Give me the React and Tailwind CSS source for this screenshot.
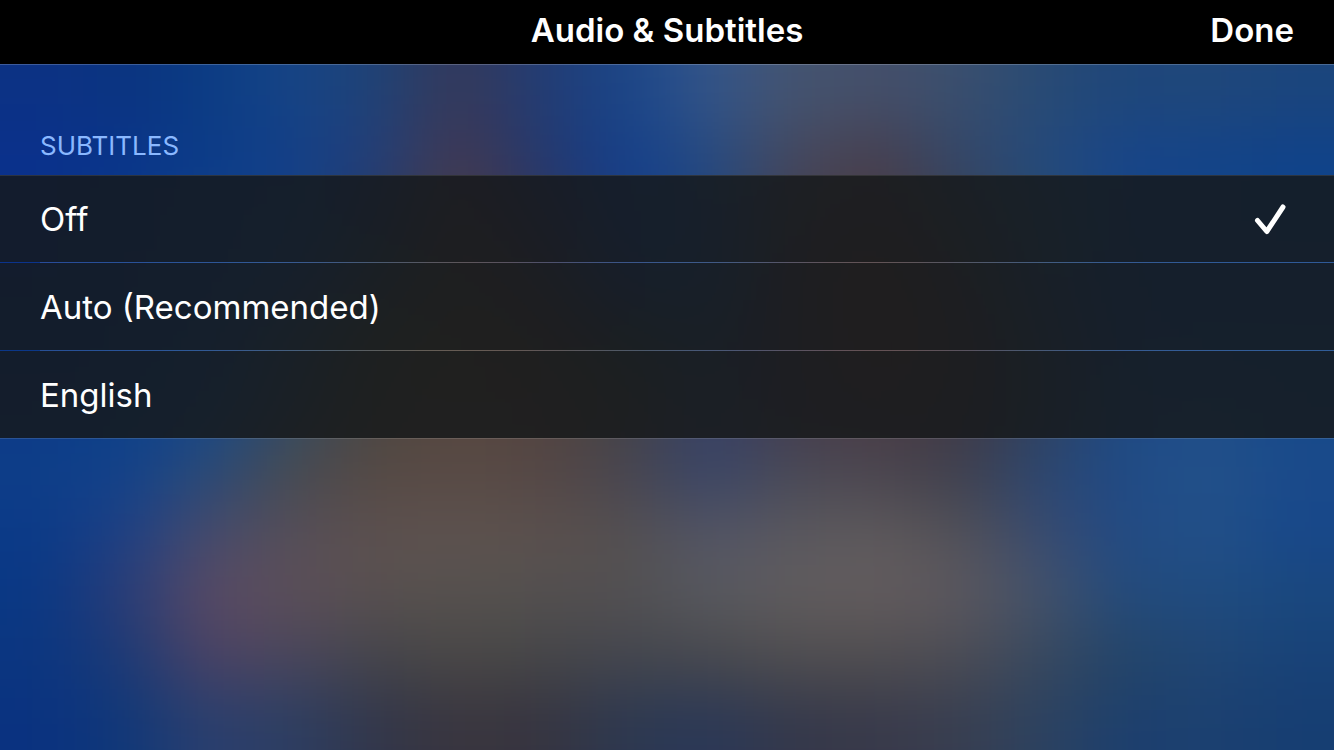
import { useState } from 'react';

const OPTIONS = [
  { id: 'off', label: 'Off' },
  { id: 'auto', label: 'Auto (Recommended)' },
  { id: 'en', label: 'English' },
];

// Coarse colour map of the paused video frame, blurred by <Backdrop />.
const FRAME_COLORS = [
  '0c3284 0b3480 0b3c84 164486 1f4276 363858 223c74 1a4588 33558a 445470 454f6a 3a4f6e 284a74 1e467a 20477a 1b457c',
  '0a308c 0a358a 0c3c88 123f88 243e78 433850 24386e 133f8c 264a80 45485e 483e4c 334668 244a7c 17458a 134388 0f428a',
  '0b328c 0a388a 0e3e88 16428a 243c66 4a3c44 30365e 163e8a 204680 444050 4c3c42 3a4256 264a70 164488 124488 10448a',
  '0b348c 0b3a8a 0f3e8a 1c4486 34465a 4c403c 403a4c 1c3e7c 20447c 463c4a 523c34 403e4a 284670 174484 14448a 14448a',
  '0b3688 0b3c8a 14428a 2c4a6c 464840 54483a 4c3e3c 34404c 2a4068 443c4c 563a38 463a44 2e4464 1a4486 16468a 14468a',
  '0c3a88 0d4088 18488a 344c64 4c4640 584840 544440 444444 38426a 443c4c 4c3c44 423a44 304260 1d4a84 204e8a 184a8a',
  '0e3e88 12428a 284a78 464a50 554843 584a44 544644 47444f 364468 484856 4a444e 3e3e4c 2b4670 1f4a86 235189 194a8a',
  '0b3a88 1e4084 464a6c 564e58 5c504e 5e534f 5b504d 545050 525466 5a585e 5e5a5c 525056 384a70 214a84 225088 18478a',
  '0a3884 2a3c76 5a4a64 5c4f58 585050 56524e 535050 525052 585a60 605c5e 645c5e 5c585e 44526a 224a7c 204c80 19487e',
  '0b3680 1c3a76 4c4264 4a465c 44444a 4a4846 464648 44464e 48484c 504e50 504e50 4c4c54 38485e 234468 204674 184278',
  '0a3280 103878 2b3f6e 2c3e62 32364a 39353e 363440 2c3850 2a3858 34384a 38394a 383e50 2c4260 1c3f6e 1c4070 163e72',
].map((row) => row.split(' '));

function Backdrop() {
  const lastCol = FRAME_COLORS[0].length - 1;
  const lastRow = FRAME_COLORS.length - 1;

  return (
    <svg
      aria-hidden="true"
      className="absolute inset-0 h-full w-full"
      preserveAspectRatio="none"
      viewBox="0 0 1600 1100"
    >
      <filter
        colorInterpolationFilters="sRGB"
        filterUnits="userSpaceOnUse"
        height="1900"
        id="frame-blur"
        width="2400"
        x="-400"
        y="-400"
      >
        <feGaussianBlur stdDeviation="46 52" />
      </filter>
      <g filter="url(#frame-blur)" shapeRendering="crispEdges">
        {FRAME_COLORS.map((row, y) =>
          row.map((color, x) => {
            // outer cells run past the edge so the blur never fades out
            const left = x === 0 ? -400 : x * 100;
            const right = x === lastCol ? 2000 : (x + 1) * 100;
            const top = y === 0 ? -400 : y * 100;
            const bottom = y === lastRow ? 1500 : (y + 1) * 100;
            return (
              <rect
                fill={`#${color}`}
                height={bottom - top}
                key={`${x}-${y}`}
                width={right - left}
                x={left}
                y={top}
              />
            );
          }),
        )}
      </g>
    </svg>
  );
}

function CheckIcon() {
  return (
    <svg
      aria-hidden="true"
      className="h-8 w-8"
      fill="none"
      stroke="currentColor"
      strokeLinecap="round"
      strokeLinejoin="round"
      strokeWidth="5"
      viewBox="0 0 32 32"
    >
      <path d="M3.5 17.5 L12.8 28.5 L29 4" />
    </svg>
  );
}

function OptionRow({ option, checked, onSelect }) {
  return (
    <li className="group">
      <label className="flex h-[87px] cursor-pointer items-center justify-between bg-[#161819]/83 pr-12 pl-10 text-[33px] leading-10 text-white group-first:border-t group-first:border-white/10">
        <input
          checked={checked}
          className="sr-only"
          name="subtitles"
          onChange={() => onSelect(option.id)}
          type="radio"
          value={option.id}
        />
        {option.label}
        {checked && <CheckIcon />}
      </label>
      <div className="ml-10 h-px bg-white/12 group-last:ml-0" />
    </li>
  );
}

export default function App() {
  const [selected, setSelected] = useState('off');

  return (
    <div className="flex min-h-screen flex-col bg-black font-['Inter','Liberation_Sans',sans-serif]">
      <header className="grid h-16 grid-cols-[1fr_auto_1fr] items-center bg-black px-10 pb-1 text-[33px] leading-10 font-semibold text-white">
        <h1 className="col-start-2">Audio &amp; Subtitles</h1>
        <button className="justify-self-end" type="button">
          Done
        </button>
      </header>

      <main className="relative flex-1 overflow-hidden">
        <Backdrop />
        <div className="relative border-t border-white/20">
          <fieldset>
            <legend className="w-full px-10 pt-16 pb-3 text-[26px] leading-[34px] text-[#8ab8ff]">
              SUBTITLES
            </legend>
            <ul>
              {OPTIONS.map((option) => (
                <OptionRow
                  checked={option.id === selected}
                  key={option.id}
                  onSelect={setSelected}
                  option={option}
                />
              ))}
            </ul>
          </fieldset>
        </div>
      </main>
    </div>
  );
}
